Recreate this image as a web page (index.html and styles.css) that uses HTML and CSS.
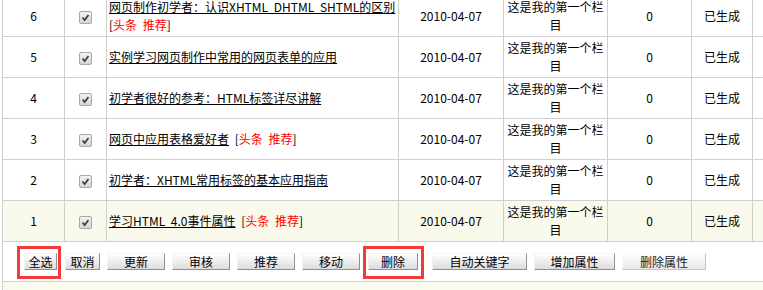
FILE: index.html
```html
<!DOCTYPE html>
<html lang="zh-CN">
  <head>
    <meta charset="UTF-8" />
    <meta name="viewport" content="width=device-width, initial-scale=1.0" />
    <title>文档列表</title>
    <link rel="stylesheet" href="styles.css">
  </head>
  <body>
    <table class="list">
      <colgroup>
        <col class="c-id">
        <col class="c-chk">
        <col class="c-title">
        <col class="c-date">
        <col class="c-cat">
        <col class="c-hit">
        <col class="c-state">
        <col class="c-op">
      </colgroup>
      <tbody>
        <tr>
          <td>6</td>
          <td><span class="cb"><svg viewBox="0 0 13 13"><path d="M3 6.5 L5.5 9.5 L10 3.5" /></svg></span></td>
          <td class="title"><a href="#">网页制作初学者：认识XHTML DHTML SHTML的区别</a> [<span class="flag">头条 推荐</span>]</td>
          <td>2010-04-07</td>
          <td class="cat">这是我的第一个栏目</td>
          <td>0</td>
          <td class="state">已生成</td>
          <td></td>
        </tr>
        <tr>
          <td>5</td>
          <td><span class="cb"><svg viewBox="0 0 13 13"><path d="M3 6.5 L5.5 9.5 L10 3.5" /></svg></span></td>
          <td class="title"><a href="#">实例学习网页制作中常用的网页表单的应用</a></td>
          <td>2010-04-07</td>
          <td class="cat">这是我的第一个栏目</td>
          <td>0</td>
          <td class="state">已生成</td>
          <td></td>
        </tr>
        <tr>
          <td>4</td>
          <td><span class="cb"><svg viewBox="0 0 13 13"><path d="M3 6.5 L5.5 9.5 L10 3.5" /></svg></span></td>
          <td class="title"><a href="#">初学者很好的参考：HTML标签详尽讲解</a></td>
          <td>2010-04-07</td>
          <td class="cat">这是我的第一个栏目</td>
          <td>0</td>
          <td class="state">已生成</td>
          <td></td>
        </tr>
        <tr>
          <td>3</td>
          <td><span class="cb"><svg viewBox="0 0 13 13"><path d="M3 6.5 L5.5 9.5 L10 3.5" /></svg></span></td>
          <td class="title"><a href="#">网页中应用表格爱好者</a> [<span class="flag">头条 推荐</span>]</td>
          <td>2010-04-07</td>
          <td class="cat">这是我的第一个栏目</td>
          <td>0</td>
          <td class="state">已生成</td>
          <td></td>
        </tr>
        <tr>
          <td>2</td>
          <td><span class="cb"><svg viewBox="0 0 13 13"><path d="M3 6.5 L5.5 9.5 L10 3.5" /></svg></span></td>
          <td class="title"><a href="#">初学者：XHTML常用标签的基本应用指南</a></td>
          <td>2010-04-07</td>
          <td class="cat">这是我的第一个栏目</td>
          <td>0</td>
          <td class="state">已生成</td>
          <td></td>
        </tr>
        <tr class="cur">
          <td>1</td>
          <td><span class="cb"><svg viewBox="0 0 13 13"><path d="M3 6.5 L5.5 9.5 L10 3.5" /></svg></span></td>
          <td class="title"><a href="#">学习HTML 4.0事件属性</a> [<span class="flag">头条 推荐</span>]</td>
          <td>2010-04-07</td>
          <td class="cat">这是我的第一个栏目</td>
          <td>0</td>
          <td class="state">已生成</td>
          <td></td>
        </tr>

        <!-- 操作按钮 -->
        <tr class="ops">
          <td colspan="8">
            <div class="bar">
              <span class="mark"><button class="btn w-all">全选</button></span>
              <button class="btn w-cancel">取消</button>
              <button class="btn w-mid">更新</button>
              <button class="btn w-mid">审核</button>
              <button class="btn w-mid">推荐</button>
              <button class="btn w-mid">移动</button>
              <span class="mark mark-del"><button class="btn w-del">删除</button></span>
              <button class="btn w-key">自动关键字</button>
              <button class="btn w-attr">增加属性</button>
              <button class="btn w-attr2 faded">删除属性</button>
            </div>
          </td>
        </tr>
        <tr class="rest">
          <td colspan="8"></td>
        </tr>
      </tbody>
    </table>
  </body>
</html>
```

FILE: styles.css
```css
body {
  margin: 0;
  overflow: hidden;
  background: #fff;
  font-family: "Noto Sans CJK SC", "DejaVu Sans", sans-serif;
  font-size: 12px;
  color: #000;
}

.list {
  margin: -5px 0 0 2px;
  border-collapse: collapse;
  table-layout: fixed;
  width: 810px;
}
.c-id { width: 62px; }
.c-chk { width: 42px; }
.c-title { width: 292px; }
.c-date { width: 105px; }
.c-cat { width: 104px; }
.c-hit { width: 84px; }
.c-state { width: 61px; }
.c-op { width: 60px; }

.list td {
  border: 1px solid #cfcfcf;
  height: 40px;
  padding: 0;
  text-align: center;
  line-height: 18px;
}
.list .title {
  text-align: left;
  padding-left: 2px;
  word-spacing: 3px;
}
.list .cat {
  padding: 0 3px;
}
.title a {
  color: #000;
}
.flag {
  color: #f00;
}
.cur td {
  background: #fafaec;
}

.cb {
  display: inline-block;
  vertical-align: middle;
  width: 11px;
  height: 11px;
  border: 1px solid #a8a8a8;
  border-radius: 2px;
  background: linear-gradient(#f2f2f2, #d6d6d6);
}
.cb svg {
  display: block;
  width: 11px;
  height: 11px;
}
.cb path {
  fill: none;
  stroke: #3c3c3c;
  stroke-width: 2;
}

.ops td {
  height: 39px;
  background: #fff;
}
.bar {
  display: flex;
  align-items: center;
  gap: 7px;
  padding-left: 21px;
}
.rest td {
  height: 20px;
  background: #fafaee;
}

.btn {
  height: 17px;
  padding: 0;
  font-family: inherit;
  font-size: 12px;
  line-height: 15px;
  color: #000;
  border: 1px solid;
  border-color: #f4f4f4 #8e8e8e #8e8e8e #f4f4f4;
  background: linear-gradient(#ffffff, #dcdcdc);
  cursor: pointer;
}
.w-all { width: 33px; }
.w-cancel { width: 35px; margin-left: 1px; }
.w-mid { width: 58px; }
.w-del { width: 50px; }
.w-key { width: 95px; margin-left: 7px; }
.w-attr { width: 81px; }
.w-attr2 { width: 84px; }
.faded {
  color: #222;
  border-color: #f8f8f8 #c4c4c4 #c4c4c4 #f8f8f8;
  background: linear-gradient(#ffffff, #e8e8e8);
}

.mark {
  position: relative;
  display: inline-flex;
}
.mark::after {
  content: "";
  position: absolute;
  left: -7px;
  top: -7px;
  right: -4px;
  bottom: -9px;
  border: 3px solid #f33a3a;
}
.mark-del {
  margin-left: 1px;
}
.mark-del::after {
  left: -5px;
  right: -6px;
}
```
